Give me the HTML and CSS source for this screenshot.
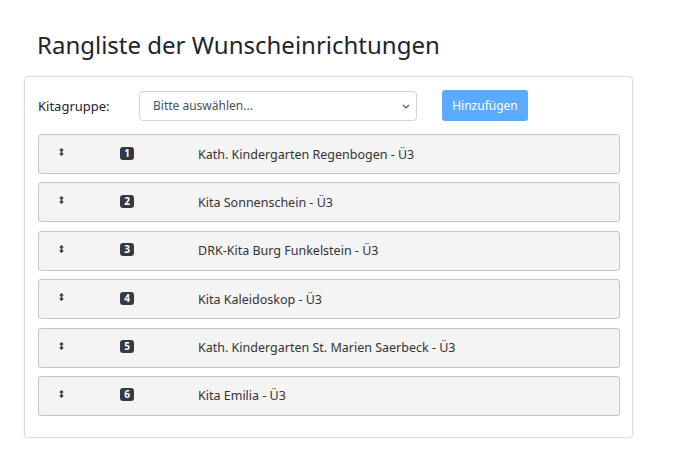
FILE: index.html
```html
<!DOCTYPE html>
<html lang="de">
<head>
<meta charset="utf-8">
<link rel="stylesheet" href="styles.css">
</head>
<body>
<div class="page">
  <h1 class="title">Rangliste der Wunscheinrichtungen</h1>
  <div class="card">
    <div class="form-row">
      <label class="label">Kitagruppe:</label>
      <div class="select">
        <span>Bitte auswählen...</span>
        <svg class="chev" width="8" height="5" viewBox="0 0 8 5"><path d="M1 1l3 3 3-3" fill="none" stroke="#555" stroke-width="1.1"/></svg>
      </div>
      <button class="btn" disabled>Hinzufügen</button>
    </div>
    <div class="list">
      <div class="item"><span class="drag"><svg width="5" height="8" viewBox="0 0 5 8"><path d="M2.5 0L5 2.6H0z M2.5 8L5 5.4H0z" fill="#333"/><rect x="1.7" y="2" width="1.6" height="4" fill="#333"/></svg></span><span class="num"><span class="badge">1</span></span><span class="name">Kath. Kindergarten Regenbogen - Ü3</span></div>
      <div class="item"><span class="drag"><svg width="5" height="8" viewBox="0 0 5 8"><path d="M2.5 0L5 2.6H0z M2.5 8L5 5.4H0z" fill="#333"/><rect x="1.7" y="2" width="1.6" height="4" fill="#333"/></svg></span><span class="num"><span class="badge">2</span></span><span class="name">Kita Sonnenschein - Ü3</span></div>
      <div class="item"><span class="drag"><svg width="5" height="8" viewBox="0 0 5 8"><path d="M2.5 0L5 2.6H0z M2.5 8L5 5.4H0z" fill="#333"/><rect x="1.7" y="2" width="1.6" height="4" fill="#333"/></svg></span><span class="num"><span class="badge">3</span></span><span class="name">DRK-Kita Burg Funkelstein - Ü3</span></div>
      <div class="item"><span class="drag"><svg width="5" height="8" viewBox="0 0 5 8"><path d="M2.5 0L5 2.6H0z M2.5 8L5 5.4H0z" fill="#333"/><rect x="1.7" y="2" width="1.6" height="4" fill="#333"/></svg></span><span class="num"><span class="badge">4</span></span><span class="name">Kita Kaleidoskop - Ü3</span></div>
      <div class="item"><span class="drag"><svg width="5" height="8" viewBox="0 0 5 8"><path d="M2.5 0L5 2.6H0z M2.5 8L5 5.4H0z" fill="#333"/><rect x="1.7" y="2" width="1.6" height="4" fill="#333"/></svg></span><span class="num"><span class="badge">5</span></span><span class="name">Kath. Kindergarten St. Marien Saerbeck - Ü3</span></div>
      <div class="item"><span class="drag"><svg width="5" height="8" viewBox="0 0 5 8"><path d="M2.5 0L5 2.6H0z M2.5 8L5 5.4H0z" fill="#333"/><rect x="1.7" y="2" width="1.6" height="4" fill="#333"/></svg></span><span class="num"><span class="badge">6</span></span><span class="name">Kita Emilia - Ü3</span></div>
    </div>
  </div>
</div>
</body>
</html>
```

FILE: styles.css
```css
* { box-sizing: border-box; }
html, body { margin: 0; background: #fff; }
body {
  font-family: "Noto Sans", "Open Sans", sans-serif;
  color: #212529;
  font-size: 13px;
}
.page { padding: 26px 0 0 24px; width: 633px; }
.title {
  margin: 0 0 12px 13px;
  font-weight: 400;
  font-size: 24px;
  line-height: 38px;
  color: #212529;
}
.card {
  border: 1px solid #dcdcdc;
  border-radius: 4px;
  box-shadow: 0 1px 3px rgba(0,0,0,0.08);
  padding: 13px 12px 13px 13px;
  width: 609px;
}
.form-row {
  display: flex;
  align-items: center;
  height: 31px;
  margin-bottom: 13px;
}
.label { width: 101px; font-size: 13px; }
.select {
  width: 278px;
  height: 30px;
  border: 1px solid #ced4da;
  border-radius: 4px;
  display: flex;
  align-items: center;
  justify-content: space-between;
  padding: 0 6px 0 13px;
  color: #495057;
  font-size: 12px;
}
.chev { margin-top: 1px; }
.btn {
  margin-left: 25px;
  width: 86px;
  height: 31px;
  border: none;
  border-radius: 3px;
  background: #5aaaff;
  color: #fff;
  font-family: inherit;
  font-size: 12px;
  padding: 0;
}
.list { display: flex; flex-direction: column; gap: 8.4px; padding-bottom: 8px; }
.item {
  height: 40px;
  background: #f4f4f4;
  border: 1px solid #c6c6c6;
  border-radius: 3px;
  display: flex;
  align-items: center;
  color: #333;
  font-size: 12.5px;
}
.drag { width: 81px; padding-left: 20px; display: flex; align-items: center; margin-top: -4px; }
.num { width: 78px; display: flex; align-items: center; margin-top: -2px; }
.badge {
  display: inline-block;
  width: 14px;
  height: 13px;
  background: #343a40;
  color: #fff;
  border-radius: 3px;
  font-size: 10px;
  font-weight: 700;
  line-height: 13px;
  text-align: center;
}
```
